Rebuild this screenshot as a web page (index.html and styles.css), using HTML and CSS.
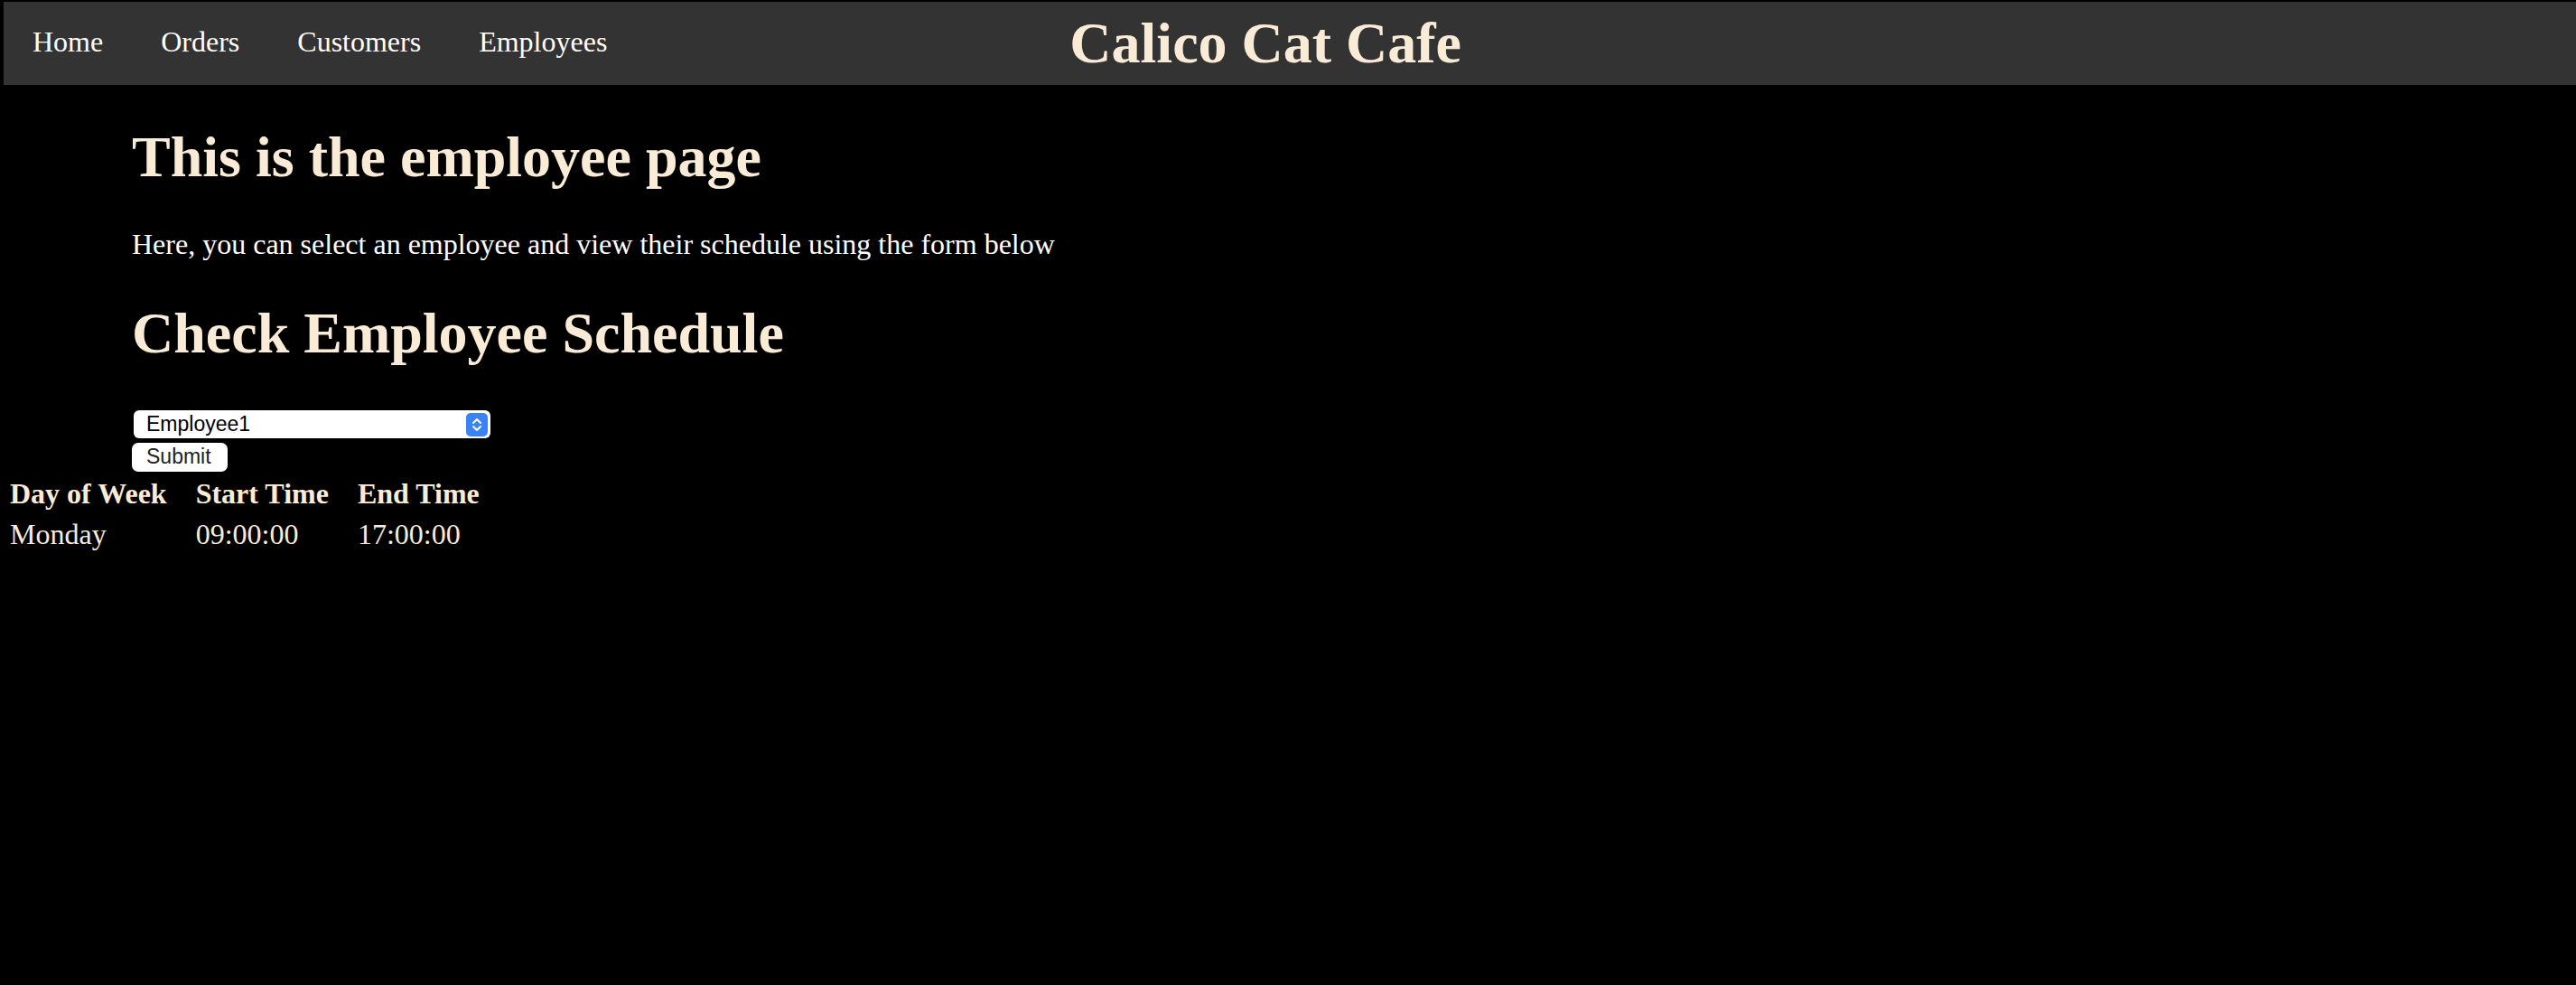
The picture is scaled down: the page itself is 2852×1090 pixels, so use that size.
FILE: index.html
```html
<!DOCTYPE html>
<html lang="en">
<head>
<meta charset="utf-8">
<title>Calico Cat Cafe - Employees</title>
<link rel="stylesheet" href="styles.css">
</head>
<body>
<nav class="topnav">
  <a class="navlink" href="#">Home</a>
  <a class="navlink" href="#">Orders</a>
  <a class="navlink" href="#">Customers</a>
  <a class="navlink" href="#">Employees</a>
  <h1 class="site-title">Calico Cat Cafe</h1>
</nav>
<div class="content">
  <h1 class="page-title first">This is the employee page</h1>
  <p class="intro">Here, you can select an employee and view their schedule using the form below</p>
  <h2 class="page-title">Check Employee Schedule</h2>
  <form class="schedule-form">
    <div class="select-wrap">
      <select class="employee-select" name="employee">
        <option>Employee1</option>
        <option>Employee2</option>
        <option>Employee3</option>
      </select>
      <svg class="stepper" width="24" height="26" viewBox="0 0 24 26" aria-hidden="true">
        <rect x="0" y="0" width="24" height="26" rx="5" fill="#3a82f7"/>
        <path d="M8 11 L12 7 L16 11" fill="none" stroke="#fff" stroke-width="2" stroke-linecap="round" stroke-linejoin="round"/>
        <path d="M8 15 L12 19 L16 15" fill="none" stroke="#fff" stroke-width="2" stroke-linecap="round" stroke-linejoin="round"/>
      </svg>
    </div>
    <button class="submit-btn" type="button">Submit</button>
  </form>
</div>
<table class="schedule">
  <tr>
    <th>Day of Week</th>
    <th>Start Time</th>
    <th>End Time</th>
  </tr>
  <tr>
    <td>Monday</td>
    <td>09:00:00</td>
    <td>17:00:00</td>
  </tr>
</table>
</body>
</html>
```

FILE: styles.css
```css
html {
  background: #000;
}

body {
  margin: 2px 0 0 4px;
  background: #000;
  font-family: "Liberation Serif", "Times New Roman", serif;
  font-size: 32px;
  color: #faebd7;
}

.topnav {
  display: flex;
  align-items: flex-start;
  height: 92px;
  background: #333333;
}

.navlink {
  display: block;
  padding: 26px 32px 0 32px;
  color: #ffffff;
  text-decoration: none;
  font-size: 32px;
  line-height: normal;
}

.site-title {
  margin: 0 0 0 480px;
  padding-top: 9px;
  font-size: 64px;
  font-weight: bold;
  line-height: normal;
  color: #faebd7;
  white-space: nowrap;
}

.content {
  padding-left: 142px;
}

.page-title {
  margin: 42.88px 0;
  font-size: 64px;
  font-weight: bold;
  line-height: normal;
  color: #faebd7;
}

.page-title.first {
  margin-bottom: 41px;
}

.intro {
  margin: 32px 0;
  font-size: 32px;
  color: #ffffff;
}

.schedule-form {
  margin: 0;
  display: flex;
  flex-direction: column;
  align-items: flex-start;
}

.select-wrap {
  position: relative;
  margin: 5px 0 0 2px;
  width: 395px;
  height: 31px;
}

.employee-select {
  -webkit-appearance: none;
  appearance: none;
  display: block;
  width: 395px;
  height: 31px;
  margin: 0;
  padding: 0 0 0 14px;
  border: none;
  border-radius: 6px;
  background: #ffffff;
  color: #000;
  font-family: "Liberation Sans", Arial, sans-serif;
  font-size: 23px;
}

.stepper {
  position: absolute;
  right: 3px;
  top: 3px;
}

.submit-btn {
  margin: 5px 0 0 0;
  width: 106px;
  height: 32px;
  padding: 0 0 0 16px;
  border: none;
  border-radius: 7px;
  background: #ffffff;
  color: #222;
  font-family: "Liberation Sans", Arial, sans-serif;
  font-size: 23px;
  text-align: left;
}

.schedule {
  margin: 0 0 0 1px;
  border-spacing: 4px;
  font-size: 32px;
  color: #faebd7;
}

.schedule th,
.schedule td {
  padding: 2px 26px 2px 2px;
  text-align: left;
}

.schedule th {
  font-weight: bold;
}
```
